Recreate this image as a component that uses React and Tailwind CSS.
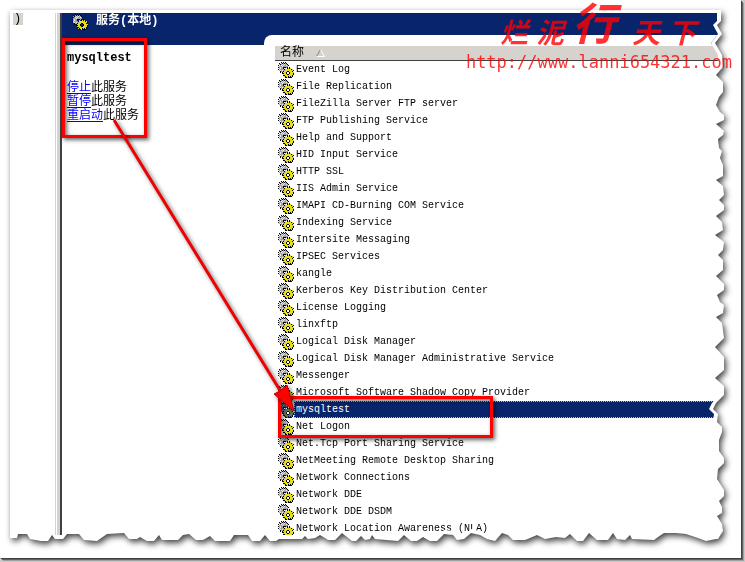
import React from "react";

const services = [
  "Event Log",
  "File Replication",
  "FileZilla Server FTP server",
  "FTP Publishing Service",
  "Help and Support",
  "HID Input Service",
  "HTTP SSL",
  "IIS Admin Service",
  "IMAPI CD-Burning COM Service",
  "Indexing Service",
  "Intersite Messaging",
  "IPSEC Services",
  "kangle",
  "Kerberos Key Distribution Center",
  "License Logging",
  "linxftp",
  "Logical Disk Manager",
  "Logical Disk Manager Administrative Service",
  "Messenger",
  "Microsoft Software Shadow Copy Provider",
  "mysqltest",
  "Net Logon",
  "Net.Tcp Port Sharing Service",
  "NetMeeting Remote Desktop Sharing",
  "Network Connections",
  "Network DDE",
  "Network DDE DSDM",
  "Network Location Awareness (NLA)",
];

const actions = [
  { link: "停止", rest: "此服务" },
  { link: "暂停", rest: "此服务" },
  { link: "重启动", rest: "此服务" },
];

// torn right edge: [distance from the right, distance from the top]
const tornRight = [
  [3, 0], [3, 11], [7, 15], [2, 24], [9, 33], [2, 45], [1, 57], [8, 65], [1, 72], [1, 82],
  [5, 87], [8, 95], [4, 102], [0, 105], [0, 110], [8, 114], [0, 121], [1, 125], [6, 129],
  [5, 138], [2, 141], [4, 148], [1, 155], [1, 166], [8, 170], [1, 176], [0, 185], [5, 190],
  [0, 195], [0, 200], [8, 206], [2, 212], [1, 220], [9, 225], [0, 232], [1, 240], [6, 245],
  [1, 250], [1, 260], [8, 266], [0, 274], [0, 280], [7, 285], [4, 292], [0, 295], [1, 303],
  [8, 307], [2, 313], [0, 328], [9, 337], [0, 347], [0, 360], [9, 368], [0, 376], [0, 385],
  [8, 393], [11, 399], [6, 404], [7, 412], [2, 417], [2, 422], [5, 430], [5, 441], [0, 448],
  [0, 453], [6, 459], [7, 469], [0, 480], [0, 486], [5, 491], [2, 497], [2, 503], [7, 506],
  [2, 514], [1, 521], [6, 529],
];

// torn bottom edge, right to left: [distance from the left, distance from the bottom]
const tornBottom = [
  [706, 3], [696, 1], [688, 4], [676, 8], [666, 9], [654, 9], [648, 5], [644, 2], [622, 3],
  [620, 7], [615, 2], [607, 3], [603, 9], [598, 2], [587, 2], [579, 9], [573, 1], [567, 1],
  [560, 8], [555, 4], [546, 5], [535, 3], [527, 7], [520, 4], [515, 2], [503, 2], [498, 7],
  [492, 9], [485, 1], [477, 3], [470, 7], [461, 9], [454, 3], [447, 2], [443, 7], [434, 8],
  [427, 1], [420, 1], [413, 5], [407, 1], [401, 1], [394, 7], [388, 1], [365, 3], [362, 7],
  [360, 3], [355, 2], [351, 6], [346, 1], [342, 1], [337, 5], [332, 9], [325, 2], [318, 2],
  [315, 4], [310, 7], [305, 4], [298, 3], [295, 6], [292, 3], [269, 3], [266, 1], [260, 1],
  [255, 7], [250, 1], [242, 1], [238, 7], [224, 7], [220, 1], [205, 1], [200, 6], [193, 2],
  [186, 2], [179, 8], [173, 7], [168, 2], [152, 2], [149, 7], [144, 1], [137, 1], [130, 5],
  [127, 3], [119, 3], [114, 9], [97, 8], [87, 1], [74, 2], [69, 8], [57, 8], [53, 3], [45, 3],
  [42, 7], [38, 1], [31, 1], [20, 3], [17, 8], [8, 8], [7, 4], [0, 4],
];

function tornClip(inset) {
  const right = tornRight.map(([d, y]) => `calc(100% - ${d + inset}px) ${y}px`);
  const bottom = tornBottom.map(([x, d]) => `${x}px calc(100% - ${d + inset}px)`);
  return `polygon(0 0, ${right.join(", ")}, ${bottom.join(", ")})`;
}

const gearPixels = [
  "...K.K.K........",
  ".K.SKSKSK.......",
  ".SKSWSWSSK......",
  "K.SWSWSSWSK.....",
  ".SSSWSSSSS......",
  "KSWSSKKKSK.K....",
  ".SWSSK.Y.KYKY...",
  "KWSSSSKYYYYYYKY.",
  ".SWSWSSYYYYYYYYK",
  "..KSSKYYYKKYYYK.",
  "..K.KYYYK..KYYYY",
  "....KKYYK..KYYYK",
  ".....YYYYKKYYYYK",
  ".....KKYYYYYYYK.",
  "......YKYYKYKYK.",
  ".......KKYKKKK..",
];

const gearColors = { K: "#000000", W: "#e8e8e8", S: "#a4a4a4", Y: "#e6dc20" };
const gearColorsSelected = { K: "#05123a", W: "#7886a8", S: "#46598a", Y: "#6b7248" };

function GearIcon({ selected }) {
  const colors = selected ? gearColorsSelected : gearColors;
  return (
    <svg className="h-4 w-4 shrink-0" viewBox="0 0 16 16" shapeRendering="crispEdges" aria-hidden="true">
      {gearPixels.map((row, y) =>
        row.split("").map((c, x) =>
          c === "." ? null : <rect key={`${x}-${y}`} x={x} y={y} width="1" height="1" fill={colors[c]} />
        )
      )}
    </svg>
  );
}

function ServiceRow({ name, selected }) {
  return (
    <tr>
      <td className="p-0">
        <div className="flex h-[17px] items-center pl-[3px]">
          <GearIcon selected={selected} />
          <span
            className={
              selected
                ? "h-[17px] flex-1 border border-dotted border-[#e8b860] bg-[#08246b] pl-px leading-[15px] text-white"
                : "flex-1 pl-[2px] leading-[17px]"
            }
          >
            {name}
          </span>
        </div>
      </td>
    </tr>
  );
}

function ServiceTable() {
  return (
    <table className="w-full border-collapse whitespace-nowrap text-left text-[10px]">
      <thead>
        <tr>
          <th className="p-0 font-normal">
            <div className="flex h-[15px] items-center gap-3 border-b border-[#404040] bg-[#d6d3ce] pl-[5px] text-xs leading-[14px]">
              名称
              <svg className="h-2 w-[9px]" viewBox="0 0 9 8" fill="none" aria-hidden="true">
                <path d="M4.5 0.5L0.5 7.5" stroke="#848284" />
                <path d="M4.5 0.5L8.5 7.5H0.5" stroke="#ffffff" />
              </svg>
            </div>
          </th>
        </tr>
      </thead>
      <tbody>
        {services.map((name) => (
          <ServiceRow key={name} name={name} selected={name === "mysqltest"} />
        ))}
      </tbody>
    </table>
  );
}

function DetailPane() {
  return (
    <section className="w-[202px] shrink-0 pt-4 pl-[5px] text-xs leading-[14px]">
      <h2 className="font-bold">mysqltest</h2>
      <ul className="mt-4">
        {actions.map((a) => (
          <li key={a.link}>
            <a href="#" className="text-[#0000ff] underline underline-offset-2">
              {a.link}
            </a>
            {a.rest}
          </li>
        ))}
      </ul>
    </section>
  );
}

function Watermark() {
  return (
    <div className="absolute top-0 right-[9px] flex flex-col items-end whitespace-nowrap text-[#ff0000]/80">
      <div className="flex h-[50px] items-end gap-2 pr-[36px] text-[28px] leading-[28px] font-bold italic">
        <span>烂</span>
        <span>泥</span>
        <span className="text-[44px] leading-[44px]">行</span>
        <span className="pl-2">天</span>
        <span>下</span>
      </div>
      <div className="font-['DejaVu_Sans_Mono',monospace] text-[17px] leading-[24px]">http://www.lanni654321.com</div>
    </div>
  );
}

function Annotations() {
  return (
    <>
      <div className="absolute top-[28px] left-[52px] h-[100px] w-[85px] border-3 border-[#ff0000] shadow-[2px_2px_4px_rgba(0,0,0,0.6),inset_2px_2px_4px_rgba(0,0,0,0.6)]" />
      <div className="absolute top-[386px] left-[268px] h-[42px] w-[215px] border-3 border-[#ff0000] shadow-[2px_2px_4px_rgba(0,0,0,0.6),inset_2px_2px_4px_rgba(0,0,0,0.6)]" />
      <svg
        className="absolute top-[108px] left-[100px] h-[296px] w-[190px] drop-shadow-[2px_2px_2px_rgba(0,0,0,0.6)]"
        viewBox="0 0 190 296"
        aria-hidden="true"
      >
        <path d="M4 2L171 274" stroke="#f00000" strokeWidth="3" />
        <path d="M184 293L164 276L170 273L177 267Z" fill="#ff0000" stroke="#c00000" />
      </svg>
    </>
  );
}

export default function App() {
  return (
    <div className="min-h-screen bg-[#c8c8c8] pr-1 pb-1 font-['Liberation_Mono','Noto_Sans_CJK_SC',monospace] text-black">
      <div className="relative bg-white pt-[10px] pr-[17px] pb-4 pl-[10px] shadow-[1px_1px_0_#404040,2px_2px_0_#606060,3px_3px_0_#a0a0a0]">
        <div className="relative drop-shadow-[2px_3px_3px_rgba(0,0,0,0.75)]">
          <div className="bg-white" style={{ clipPath: tornClip(0) }}>
            <div className="flex pt-[3px] pb-[5px]" style={{ clipPath: tornClip(4) }}>
              <div className="w-[45px] shrink-0 pl-[3px]">
                <div className="w-[10px] bg-[#d6d3ce] pl-px text-xs leading-[12px]">)</div>
              </div>
              <div className="w-[7px] shrink-0 border-r-2 border-l border-r-[#424142] border-l-[#d6d3ce] bg-[#d6d3ce]">
                <div className="h-full w-px bg-white" />
              </div>
              <main className="min-w-0 flex-1">
                <header className="flex h-[22px] items-start gap-2 bg-[#08246b] pt-px pl-[10px] text-white">
                  <GearIcon />
                  <h1 className="text-xs leading-[14px] font-bold">服务(本地)</h1>
                </header>
                <div className="flex bg-linear-to-b from-[#08246b] from-[10px] to-white to-[10px]">
                  <DetailPane />
                  <section className="min-w-0 flex-1 rounded-tl-lg bg-white pt-[11px] pl-[11px]">
                    <ServiceTable />
                  </section>
                </div>
              </main>
            </div>
          </div>
        </div>
        <div className="absolute top-[10px] left-[10px]">
          <Annotations />
        </div>
        <Watermark />
      </div>
    </div>
  );
}
